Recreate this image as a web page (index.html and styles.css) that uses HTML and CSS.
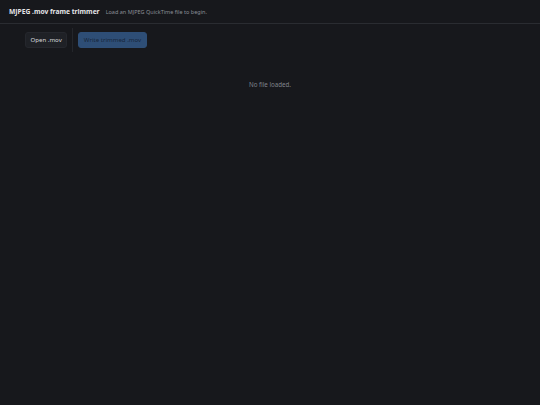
FILE: index.html
```html
<!DOCTYPE html>
<html lang="en">
<head>
<meta charset="utf-8">
<title>MJPEG .mov frame trimmer</title>
<link rel="stylesheet" href="styles.css">
</head>
<body>
<header class="app-header">
  <h1 class="app-title">MJPEG .mov frame trimmer</h1>
  <span class="app-status">Load an MJPEG QuickTime file to begin.</span>
</header>
<div class="toolbar">
  <button class="btn" type="button">Open .mov</button>
  <span class="divider"></span>
  <button class="btn btn-primary" type="button" disabled>Write trimmed .mov</button>
</div>
<main class="content">
  <p class="empty">No file loaded.</p>
</main>
</body>
</html>
```

FILE: styles.css
```css
html, body {
  margin: 0;
  padding: 0;
  background: #17181c;
  height: 100%;
}
body {
  font-family: "Noto Sans", "Open Sans", sans-serif;
  color: #d6d8dc;
}
.app-header {
  display: flex;
  align-items: center;
  gap: 6px;
  padding: 0 9px;
  border-bottom: 1px solid #2a2c31;
  box-sizing: border-box;
  height: 24px;
}
.app-title {
  margin: 0;
  font-size: 6.7px;
  font-weight: 700;
  color: #e4e5e8;
}
.app-status {
  font-size: 5.5px;
  color: #8a8e96;
}
.toolbar {
  display: flex;
  align-items: center;
  gap: 5px;
  padding: 4px 25px;
}
.btn {
  font-family: inherit;
  font-size: 6.1px;
  height: 16px;
  padding: 0 4.5px;
  border-radius: 3px;
  border: 1px solid #25272d;
  background: #1f2126;
  color: #d6d8dc;
  line-height: 1;
}
.btn-primary,
.btn-primary:disabled {
  background: #2e4e76;
  border-color: #2e4e76;
  color: #17263b;
}
.divider {
  width: 1px;
  height: 24px;
  background: #24262b;
}
.content {
  padding-top: 24px;
}
.empty {
  margin: 0;
  text-align: center;
  font-size: 6.2px;
  color: #80848c;
}
```
